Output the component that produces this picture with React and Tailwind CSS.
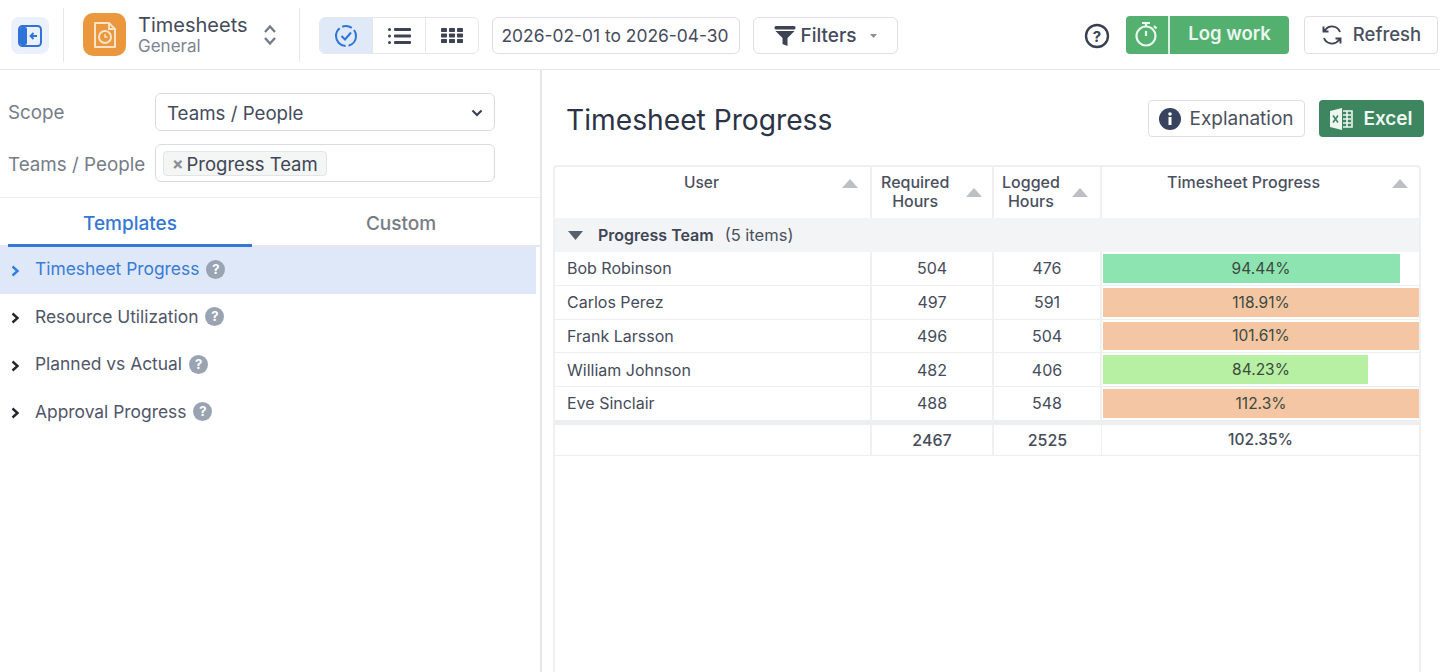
import React from "react";

const Q = () => (
  <span className="ml-[7px] inline-flex h-[19px] w-[19px] items-center justify-center rounded-full bg-[#9aa3b2] text-[13px] font-bold leading-none text-white">?</span>
);

const Chev = ({ c }) => (
  <svg width="11" height="12" viewBox="0 0 11 12" className="mr-[14px] mt-[3px] ml-[10px] shrink-0">
    <path d="M2.5 1.5 L7.5 6 L2.5 10.5" fill="none" stroke={c} strokeWidth="2.4" />
  </svg>
);

const Sort = () => (
  <svg width="16" height="9" viewBox="0 0 16 9" className="shrink-0"><path d="M8 0 L16 9 L0 9Z" fill="#bcbfc4" /></svg>
);

const rows = [
  ["Bob Robinson", "504", "476", "94.44%", "#8ee4b1", "94%"],
  ["Carlos Perez", "497", "591", "118.91%", "#f5c6a3", "100%"],
  ["Frank Larsson", "496", "504", "101.61%", "#f5c6a3", "100%"],
  ["William Johnson", "482", "406", "84.23%", "#b7f0a3", "84%"],
  ["Eve Sinclair", "488", "548", "112.3%", "#f5c6a3", "100%"],
];

const menu = ["Resource Utilization", "Planned vs Actual", "Approval Progress"];
const cols = "grid grid-cols-[317px_122px_108px_1fr]";

export default function App() {
  return (
    <div className="flex h-[672px] w-[1440px] flex-col overflow-hidden bg-white font-['Inter',sans-serif] text-[#3d4354]">
      <header className="flex h-[70px] shrink-0 items-center border-b border-[#e5e7eb] pl-[11px] pr-[2px]">
        <button className="mt-[2px] flex h-[37px] w-[38px] items-center justify-center rounded-lg bg-[#eaf1fc]">
          <svg width="26" height="26" viewBox="0 0 26 26">
            <rect x="2" y="3" width="22" height="20" rx="3.5" fill="none" stroke="#2f73d9" strokeWidth="2" />
            <rect x="3" y="4" width="7" height="18" rx="2" fill="#2f73d9" />
            <path d="M20 13 H14 M16.5 10 L13.5 13 L16.5 16" fill="none" stroke="#2f73d9" strokeWidth="1.8" />
          </svg>
        </button>
        <div className="ml-[14px] h-[54px] w-px bg-[#e5e7eb]" />
        <div className="ml-[19px] flex h-[43px] w-[43px] items-center justify-center rounded-[10px] bg-[#ea973d]">
          <svg width="26" height="30" viewBox="0 0 26 30" fill="none" stroke="#fbe3c6" strokeWidth="2">
            <path d="M3 3 H17 L23 9 V27 H3Z" strokeLinejoin="round" />
            <path d="M17 3 V9 H23" />
            <circle cx="13" cy="17" r="6" />
            <path d="M13 14 V17 H15.5" strokeWidth="1.5" />
          </svg>
        </div>
        <div className="ml-[12px] flex w-[125px] flex-col">
          <span className="text-[20px] leading-[24px] text-[#454b5b]">Timesheets</span>
          <span className="text-[17px] leading-[19px] text-[#7d8491]">General</span>
        </div>
        <svg width="14" height="24" viewBox="0 0 14 24" fill="none" stroke="#757c89" strokeWidth="2.4">
          <path d="M2 9 L7 3.5 L12 9 M2 15 L7 20.5 L12 15" />
        </svg>
        <div className="ml-[22px] h-[54px] w-px bg-[#e5e7eb]" />
        <div className="ml-[19px] mt-[2px] flex h-[37px] w-[160px] overflow-hidden rounded-md border border-[#e5e7eb]">
          <div className="flex w-[53px] items-center justify-center border-r border-[#e5e7eb] bg-[#dfe9f8]">
            <svg width="24" height="24" viewBox="0 0 24 24" fill="none" stroke="#2f73d9" strokeWidth="2">
              <circle cx="12" cy="12" r="10" strokeDasharray="13 3 24 3 10 3" />
              <path d="M7.5 12 L11 15.5 L17 8.5" />
            </svg>
          </div>
          <div className="flex w-[53px] items-center justify-center border-r border-[#e5e7eb]">
            <svg width="23" height="18" viewBox="0 0 23 18" fill="#3d4354">
              <circle cx="1.5" cy="2.5" r="1.5" /><circle cx="1.5" cy="9" r="1.5" /><circle cx="1.5" cy="15.5" r="1.5" />
              <rect x="6" y="1" width="17" height="3" rx="1" /><rect x="6" y="7.5" width="17" height="3" rx="1" /><rect x="6" y="14" width="17" height="3" rx="1" />
            </svg>
          </div>
          <div className="flex flex-1 items-center justify-center">
            <svg width="22" height="15" viewBox="0 0 22 15" fill="#3d4354">
              {[0, 5.5, 11].map((y) => [0, 8, 16].map((x) => <rect key={`${x}-${y}`} x={x} y={y} width="6" height="4" rx="0.7" />))}
            </svg>
          </div>
        </div>
        <div className="ml-[13px] mt-[2px] flex h-[37px] w-[248px] items-center justify-center rounded-md border border-[#dcdfe4] pr-[2px] pt-[2px] text-[17.4px] text-[#454b5b]">2026-02-01 to 2026-04-30</div>
        <div className="ml-[13px] mt-[2px] flex h-[37px] w-[145px] items-center justify-center rounded-md border border-[#dcdfe4]">
          <svg width="22" height="22" viewBox="0 0 22 22" fill="#3d4354">
            <rect x="0.5" y="1" width="21" height="3.5" rx="1.5" />
            <path d="M1.5 6 H20.5 L13.5 13 V21 L8.5 19 V13Z" />
          </svg>
          <span className="ml-[4px] pt-[2px] text-[19px] font-medium text-[#454b5b]">Filters</span>
          <svg width="7" height="4" viewBox="0 0 7 4" className="ml-[13px]"><path d="M0 0 H7 L3.5 4Z" fill="#8a909c" /></svg>
        </div>
        <svg width="26" height="26" viewBox="0 0 26 26" fill="none" className="ml-[186px] mt-[2px]">
          <circle cx="13" cy="13" r="11" stroke="#3a4052" strokeWidth="2.4" />
          <text x="13" y="18.5" textAnchor="middle" fontSize="15" fontWeight="700" fill="#3a4052" fontFamily="Inter">?</text>
        </svg>
        <div className="ml-[16px] flex h-[38px] w-[163px] overflow-hidden rounded bg-[#54b06f] text-white">
          <div className="flex w-[44px] items-center justify-center border-r-2 border-[#d9efdf]">
            <svg width="24" height="27" viewBox="0 0 24 27" fill="none" stroke="#eaf7ee" strokeWidth="2.2">
              <circle cx="11" cy="15" r="9.5" /><path d="M7 2 H15 M11 2 V5 M19 5 L21.5 7.5 M11 10 V15" />
            </svg>
          </div>
          <div className="flex flex-1 items-center justify-center pb-[2px] text-[18.5px] font-semibold text-[#eaf7ee]">Log work</div>
        </div>
        <div className="ml-[15px] flex h-[38px] w-[134px] items-center justify-center rounded border border-[#dcdfe4]">
          <svg width="22" height="22" viewBox="0 0 22 22" fill="none" stroke="#3d4354" strokeWidth="1.9">
            <path d="M19 8 A8.5 8.5 0 0 0 4.5 5.5 L2.5 7.5 M2.5 2.5 V7.5 H7.5" />
            <path d="M3 14 A8.5 8.5 0 0 0 17.5 16.5 L19.5 14.5 M19.5 19.5 V14.5 H14.5" />
          </svg>
          <span className="ml-[10px] text-[18.5px] font-medium text-[#4a5060]">Refresh</span>
        </div>
      </header>

      <div className="flex min-h-0 flex-1">
        <aside className="flex w-[542px] shrink-0 flex-col border-r-2 border-[#e5e7eb]">
          <div className="flex flex-col gap-[13px] border-b border-[#eceef0] pb-[15px] pl-[8px] pr-[45px] pt-[23px]">
            <div className="flex items-center">
              <span className="w-[147px] pt-[2px] text-[18.8px] text-[#767c88]">Scope</span>
              <div className="flex h-[38px] flex-1 items-center justify-between rounded-md border border-[#d9dcdf] pl-[11px] pr-[11px] pt-[5px] text-[18.7px] text-[#454b5b]">
                Teams / People
                <svg width="12" height="8" viewBox="0 0 12 8" className="mb-[4px]"><path d="M1.5 1.5 L6 6 L10.5 1.5" fill="none" stroke="#3a4052" strokeWidth="2.2" /></svg>
              </div>
            </div>
            <div className="flex items-center">
              <span className="w-[147px] whitespace-nowrap pt-[4px] text-[18.8px] text-[#767c88]">Teams / People</span>
              <div className="flex h-[38px] flex-1 items-center rounded-md border border-[#d9dcdf] pl-[7px] pt-[1px]">
                <div className="flex h-[25px] items-center rounded-sm border border-[#e2e4e6] bg-[#f4f5f5] pl-[8px] pr-[8px] pt-[3px] text-[18.5px] text-[#3f4556]">
                  <span className="mr-[3px] text-[17px] font-bold text-[#8b8f96]">×</span>Progress Team
                </div>
              </div>
            </div>
          </div>
          <div className="flex h-[49px] border-b-2 border-[#e5e7eb] pl-[8px] pr-[4px]">
            <div className="-mb-[2px] flex w-[244px] items-center justify-center border-b-[3px] border-[#3577d4] pt-[7px] text-[19px] font-medium text-[#3577d4]">Templates</div>
            <div className="flex flex-1 items-center justify-center pl-[14px] pt-[5px] text-[19px] font-medium text-[#777c84]">Custom</div>
          </div>
          <div className="mr-[4px] flex h-[47px] items-center bg-[#dfe8f9] pb-[2px] text-[17.4px] text-[#3a7bd5]">
            <Chev c="#2f80e0" />Timesheet Progress<Q />
          </div>
          {menu.map((m) => (
            <div key={m} className="flex h-[47.5px] items-center pb-[2px] text-[17.4px] text-[#50566a]">
              <Chev c="#23262e" />{m}<Q />
            </div>
          ))}
        </aside>

        <main className="min-w-0 flex-1 pl-[11px] pr-[16px]">
          <div className="flex h-[95px] items-start justify-between pl-[13px]">
            <h1 className="mt-[31px] text-[28.2px] font-normal leading-[38px] text-[#2b3346]">Timesheet Progress</h1>
            <div className="mt-[30px] flex gap-[14px]">
              <div className="flex h-[37px] w-[157px] items-center justify-center rounded border border-[#dcdfe4]">
                <svg width="22" height="22" viewBox="0 0 22 22"><circle cx="11" cy="11" r="11" fill="#37435f" /><rect x="9.5" y="9" width="3" height="8" fill="#fff" /><circle cx="11" cy="6" r="1.8" fill="#fff" /></svg>
                <span className="ml-[8px] pt-[2px] text-[19px] text-[#4a5060]">Explanation</span>
              </div>
              <div className="flex h-[37px] w-[105px] items-center justify-center rounded bg-[#3d8660] text-white">
                <svg width="23" height="22" viewBox="0 0 23 22">
                  <path d="M0 3 L12 0 V22 L0 19Z" fill="#eef6f1" />
                  <path d="M3 7.5 L8 14.5 M8 7.5 L3 14.5" stroke="#3d8660" strokeWidth="1.6" />
                  <path d="M13 3 H22 V19 H13 M13 7 H21 M13 11 H21 M13 15 H21 M17 3 V19" fill="none" stroke="#eef6f1" strokeWidth="1.6" />
                </svg>
                <span className="ml-[10px] pt-[2px] text-[19px] font-semibold text-[#f0f7f3]">Excel</span>
              </div>
            </div>
          </div>

          <div className="mr-[3px] h-[507px] rounded-t border-x-2 border-t-2 border-[#eef0f1] text-[16px]">
            <div className={`${cols} h-[51px] text-[#4a5060]`}>
              <div className="flex justify-between border-r-2 border-[#eef0f1] pl-[129px] pr-[12px] pt-[4px]">
                <span className="font-medium text-[15.5px]">User</span><span className="mt-[8px]"><Sort /></span>
              </div>
              <div className="flex items-center justify-between border-r-2 border-[#eef0f1] pb-[2px] pl-[9px] pr-[10px]">
                <span className="text-center text-[16px] font-medium leading-[19px]">Required<br />Hours</span><span className="mt-[2px]"><Sort /></span>
              </div>
              <div className="flex items-center justify-between border-r-2 border-[#eef0f1] pb-[2px] pl-[8px] pr-[12px]">
                <span className="text-center text-[16px] font-medium leading-[19px]">Logged<br />Hours</span><span className="mt-[2px]"><Sort /></span>
              </div>
              <div className="flex justify-between pl-[65px] pr-[11px] pt-[3px]">
                <span className="text-[16px] font-medium">Timesheet Progress</span><span className="mt-[9px]"><Sort /></span>
              </div>
            </div>
            <div className="flex h-[34px] items-center bg-[#f3f4f5] pl-[13px] text-[16px] text-[#4a5060]">
              <svg width="15" height="9" viewBox="0 0 15 9"><path d="M0 0 H15 L7.5 9Z" fill="#595f6b" /></svg>
              <span className="ml-[15px] font-semibold text-[#3f4556]">Progress Team</span>
              <span className="ml-[11px] text-[16.5px]">(5 items)</span>
            </div>
            {rows.map((r) => (
              <div key={r[0]} className={`${cols} h-[33.75px] border-b border-[#eceef0] text-[#454b5b]`}>
                <div className="flex items-center border-r-2 border-[#eef0f1] pl-[12px]">{r[0]}</div>
                <div className="flex items-center justify-center border-r-2 border-[#eef0f1]">{r[1]}</div>
                <div className="flex items-center justify-center border-r-2 border-[#eef0f1]">{r[2]}</div>
                <div className="py-[2px] pl-[1px]">
                  <div className="relative h-full w-full">
                    <div className="h-full" style={{ width: r[5], backgroundColor: r[4] }} />
                    <span className="absolute inset-0 flex items-center justify-center text-[15.5px] text-[#3b4a3f]">{r[3]}</span>
                  </div>
                </div>
              </div>
            ))}
            <div className={`${cols} h-[35px] border-b border-t-4 border-[#eceef0] font-medium text-[#454b5b]`}>
              <div className="border-r-2 border-[#eef0f1]" />
              <div className="flex items-center justify-center border-r-2 border-[#eef0f1]">2467</div>
              <div className="flex items-center justify-center border-r border-[#eef0f1]">2525</div>
              <div className="flex items-center justify-center text-[15.5px]">102.35%</div>
            </div>
          </div>
        </main>
      </div>
    </div>
  );
}
